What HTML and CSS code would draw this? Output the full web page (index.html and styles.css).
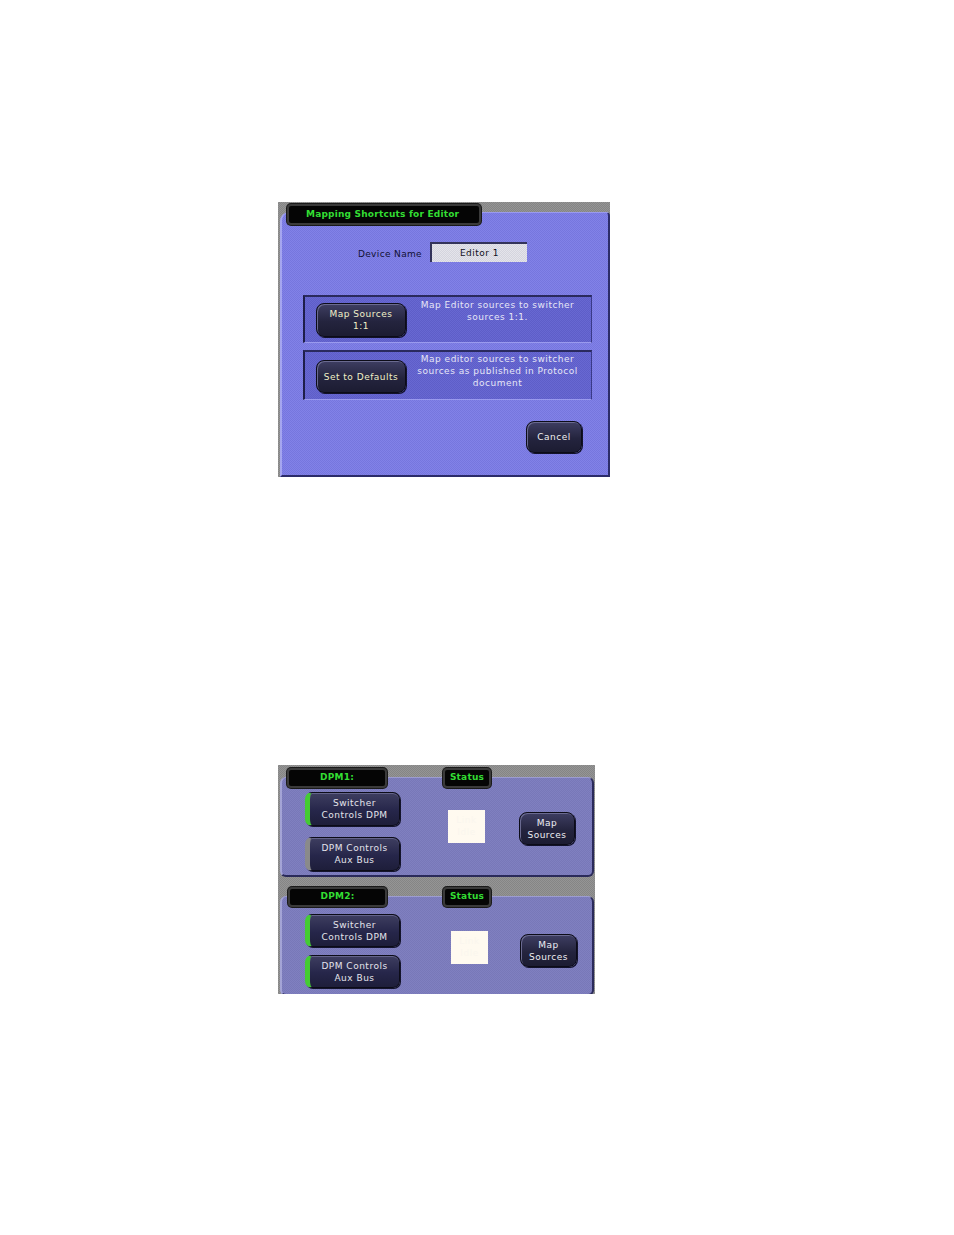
FILE: index.html
```html
<!DOCTYPE html>
<html>
<head>
<meta charset="utf-8">
<link rel="stylesheet" href="styles.css">
</head>
<body>
<div class="page">
  <div class="shot shot-map">
    <div class="tab tab-title">Mapping Shortcuts for Editor</div>
    <div class="map-panel">
      <div class="device-row">
        <span class="device-label">Device Name</span>
        <span class="device-input">Editor 1</span>
      </div>
      <div class="group group-one">
        <div class="btn btn-map">Map Sources<br>1:1</div>
        <div class="desc desc-one">Map Editor sources to switcher<br>sources 1:1.</div>
      </div>
      <div class="group group-two">
        <div class="btn btn-defaults">Set to Defaults</div>
        <div class="desc desc-two">Map editor sources to switcher<br>sources as published in Protocol<br>document</div>
      </div>
      <div class="cancel-row">
        <div class="btn btn-cancel">Cancel</div>
      </div>
    </div>
  </div>

  <div class="shot shot-dpm">
    <div class="dpm-section sec-one">
      <div class="tab-row">
        <div class="tab tab-dpm">DPM1:</div>
        <div class="tab tab-status">Status</div>
      </div>
      <div class="dpm-panel">
        <div class="dpm-col">
          <div class="sbtn on">Switcher<br>Controls DPM</div>
          <div class="sbtn off">DPM Controls<br>Aux Bus</div>
        </div>
        <div class="status-box">Link<br>Idle</div>
        <div class="btn btn-mapsrc">Map<br>Sources</div>
      </div>
    </div>
    <div class="dpm-section sec-two">
      <div class="tab-row">
        <div class="tab tab-dpm">DPM2:</div>
        <div class="tab tab-status">Status</div>
      </div>
      <div class="dpm-panel">
        <div class="dpm-col">
          <div class="sbtn on">Switcher<br>Controls DPM</div>
          <div class="sbtn on">DPM Controls<br>Aux Bus</div>
        </div>
        <div class="status-box">Link<br>Idle</div>
        <div class="btn btn-mapsrc">Map<br>Sources</div>
      </div>
    </div>
  </div>
</div>
</body>
</html>
```

FILE: styles.css
```css
html, body {
  margin: 0;
  padding: 0;
  background: #ffffff;
}
body {
  font-family: "DejaVu Sans", Verdana, sans-serif;
  font-size: 9px;
  line-height: 12px;
  letter-spacing: 0.5px;
}
.page {
  padding: 202px 0 0 278px;
}

.shot {
  position: relative;
  background-color: #8c8c8c;
  background-image: repeating-conic-gradient(#858585 0 25%, #959595 0 50%);
  background-size: 2px 2px;
  overflow: hidden;
}

/* ---------- tabs ---------- */
.tab {
  position: relative;
  z-index: 1;
  box-sizing: border-box;
  height: 21px;
  background: #050505;
  border: 2px solid #3a3a3a;
  border-radius: 4px;
  box-shadow: 0 0 0 1px #1a1a1a;
  color: #33dd33;
  font-weight: bold;
  font-size: 9px;
  text-align: center;
  line-height: 16px;
  letter-spacing: 0.2px;
}

/* ---------- shot 1 ---------- */
.shot-map {
  width: 332px;
  height: 275px;
  padding: 2px 0 0 2px;
  box-sizing: border-box;
}
.tab-title {
  width: 194px;
  margin-left: 7px;
  text-align: left;
  padding-left: 17px;
}
.map-panel {
  margin-top: -13px;
  box-sizing: border-box;
  width: 330px;
  height: 265px;
  background-color: #7b7be2;
  background-image: repeating-conic-gradient(#7676de 0 25%, #8282e8 0 50%);
  background-size: 2px 2px;
  border-top-left-radius: 9px;
  border-top-right-radius: 4px;
  border-left: 2px solid #a6a6f0;
  border-top: 1px solid #9a9aee;
  border-right: 2px solid #2c2c6a;
  border-bottom: 2px solid #2c2c6a;
  padding-top: 29px;
}
.device-row {
  display: flex;
  align-items: center;
  gap: 8px;
  height: 20px;
}
.device-label {
  width: 140px;
  text-align: right;
  color: #111133;
  letter-spacing: 0.35px;
  padding-top: 3px;
}
.device-input {
  box-sizing: border-box;
  width: 97px;
  height: 20px;
  background-color: #dcdce4;
  background-image: repeating-conic-gradient(#d4d4de 0 25%, #e4e4ea 0 50%);
  background-size: 2px 2px;
  border-left: 2px solid #33335a;
  border-top: 2px solid #33335a;
  text-align: center;
  line-height: 19px;
  color: #111122;
}

.group {
  display: flex;
  box-sizing: border-box;
  width: 289px;
  margin-left: 21px;
  background-color: #6262cc;
  background-image: repeating-conic-gradient(#5e5ec8 0 25%, #6868d2 0 50%);
  background-size: 2px 2px;
  border-left: 2px solid #1e1e4a;
  border-top: 2px solid #2a2a5e;
  border-right: 1px solid #3a3a88;
  border-bottom: 1px solid #9a9aee;
}
.group-one {
  height: 48px;
  margin-top: 33px;
  padding: 6px 0 0 11px;
}
.group-two {
  height: 50px;
  margin-top: 7px;
  padding: 8px 0 0 11px;
}
.desc {
  flex: 1;
  text-align: center;
  color: #e6e6f6;
  padding-right: 2px;
  white-space: nowrap;
}
.desc-one { margin-top: -4px; }
.desc-two { margin-top: -7px; }

.btn {
  box-sizing: border-box;
  background: linear-gradient(#3e3e62, #24243e 55%, #1c1c32);
  border: 1px solid #0c0c18;
  border-radius: 8px;
  box-shadow: inset 1px 1px 0 #6a6a90, 1px 1px 0 #12122a;
  color: #f0f0c8;
  text-align: center;
  display: flex;
  align-items: center;
  justify-content: center;
  white-space: nowrap;
}
.btn-map,
.btn-defaults {
  width: 90px;
  height: 34px;
  flex: none;
}
.btn-defaults {
  height: 33px;
}
.cancel-row {
  margin-top: 21px;
  padding-left: 244px;
}
.btn-cancel {
  width: 56px;
  height: 32px;
  color: #f0f0f0;
}

/* ---------- shot 2 ---------- */
.shot-dpm {
  width: 317px;
  height: 229px;
  margin-top: 288px;
  box-sizing: border-box;
  padding: 3px 0 0 2px;
}
.tab-row {
  display: flex;
  height: 20px;
  padding-left: 7px;
}
.tab-row .tab {
  height: 20px;
  line-height: 15px;
}
.tab-dpm {
  width: 100px;
}
.tab-status {
  width: 48px;
  margin-left: 56px;
}
.sec-two {
  margin-top: 10px;
}
.sec-two .tab-dpm {
  margin-left: 1px;
  width: 99px;
}
.dpm-panel {
  margin-top: -11px;
  box-sizing: border-box;
  width: 314px;
  height: 100px;
  display: flex;
  align-items: flex-start;
  background-color: #7b7bbb;
  background-image: repeating-conic-gradient(#7878b8 0 25%, #8080c0 0 50%);
  background-size: 2px 2px;
  border-radius: 6px;
  border-left: 2px solid #a4a4d6;
  border-top: 1px solid #9c9cd0;
  border-right: 2px solid #2a2a5a;
  border-bottom: 2px solid #2a2a5a;
  padding-left: 23px;
}
.dpm-col {
  display: flex;
  flex-direction: column;
  width: 95px;
}
.sec-one .dpm-col { padding-top: 14px; gap: 11px; }
.sec-two .dpm-col { padding-top: 17px; gap: 8px; }

.sbtn {
  box-sizing: border-box;
  height: 34px;
  background: linear-gradient(#3e3e60, #26264a 55%, #1e1e3a);
  border: 1px solid #0c0c18;
  border-left: 5px solid #8a8a8a;
  border-radius: 7px;
  box-shadow: inset 0 1px 0 #64648a, 1px 1px 0 #14142c;
  color: #e4e4ec;
  text-align: center;
  display: flex;
  align-items: center;
  justify-content: center;
  white-space: nowrap;
}
.sbtn.on {
  border-left-color: #44cc33;
}
.sec-two .sbtn { height: 33px; }

.status-box {
  width: 37px;
  height: 33px;
  background: #fffaf0;
  color: #faf6ee;
  text-align: center;
  font-size: 9px;
  line-height: 12px;
  box-sizing: border-box;
  padding-top: 4px;
}
.sec-one .status-box { margin: 32px 0 0 48px; }
.sec-two .status-box { margin: 34px 0 0 51px; }

.btn-mapsrc {
  width: 56px;
  height: 33px;
  color: #eeeef4;
}
.sec-one .btn-mapsrc { margin: 34px 0 0 34px; }
.sec-two .btn-mapsrc { margin: 37px 0 0 32px; width: 57px; }
```
